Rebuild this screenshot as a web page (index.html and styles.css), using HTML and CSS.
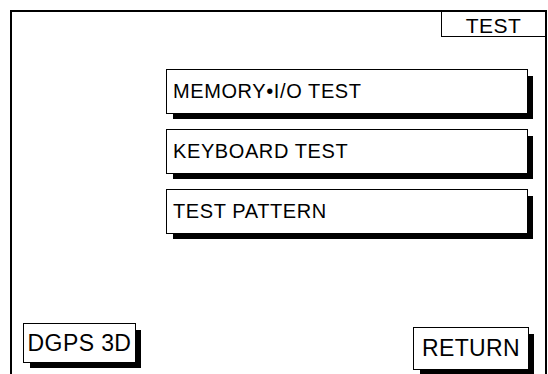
FILE: index.html
```html
<!DOCTYPE html>
<html lang="en">
<head>
    <meta charset="UTF-8">
    <title>Test</title>
    <link rel="stylesheet" href="styles.css">
</head>
<body>
    <div class="screen">
        <div class="title-bar">
            <div class="title">TEST</div>
        </div>

        <div class="menu">
            <div class="menu-item">MEMORY&bull;I/O TEST</div>
            <div class="menu-item">KEYBOARD TEST</div>
            <div class="menu-item">TEST PATTERN</div>
        </div>

        <div class="bottom-row">
            <div class="key key-status">DGPS 3D</div>
            <div class="key key-return">RETURN</div>
        </div>
    </div>
</body>
</html>
```

FILE: styles.css
```css
* {
    box-sizing: border-box;
}

body {
    margin: 0;
    background: #fff;
    font-family: 'Liberation Sans', Arial, sans-serif;
    color: #000;
    overflow: hidden;
}

.screen {
    width: 537px;
    height: 364px;
    margin: 10px 0 0 10px;
    border: 2px solid #000;
    border-bottom: none;
    display: flex;
    flex-direction: column;
}

.title-bar {
    display: flex;
    justify-content: flex-end;
}

.title {
    width: 104px;
    height: 25px;
    border: 1px solid #000;
    border-top: none;
    border-right: none;
    font-size: 21px;
    letter-spacing: 0.5px;
    line-height: 28px;
    text-align: center;
    overflow: hidden;
}

.menu {
    display: flex;
    flex-direction: column;
    gap: 15px;
    margin: 32px 0 0 154px;
}

.menu-item {
    width: 362px;
    height: 45px;
    border: 1px solid #000;
    box-shadow: 6px 6px 0 -1px #000;
    padding-left: 6px;
    font-size: 20px;
    letter-spacing: 0.6px;
    line-height: 43px;
    background: #fff;
}

.bottom-row {
    display: flex;
    justify-content: space-between;
    align-items: flex-start;
    margin-top: 89px;
    padding: 0 16px 0 11px;
}

.key {
    border: 1px solid #000;
    box-shadow: 6px 6px 0 -1px #000;
    font-size: 23px;
    letter-spacing: 0.4px;
    text-align: center;
    background: #fff;
}

.key-status {
    width: 113px;
    height: 40px;
    line-height: 38px;
}

.key-return {
    width: 116px;
    height: 43px;
    line-height: 41px;
    margin-top: 4px;
}
```
